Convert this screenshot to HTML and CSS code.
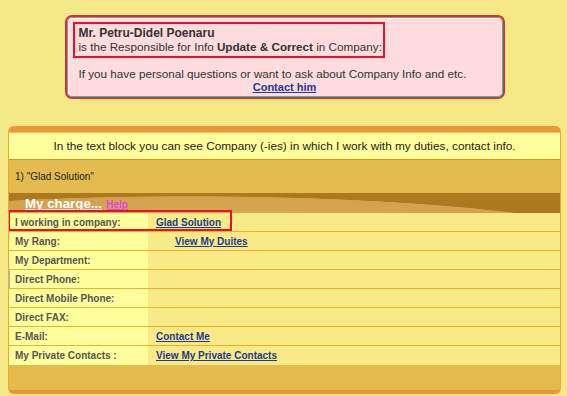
FILE: index.html
```html
<!DOCTYPE html>
<html lang="en">
<head>
  <meta charset="UTF-8" />
  <title>My charge</title>
  <link rel="stylesheet" href="styles.css">
</head>
<body>
  <div class="notice">
    <div class="notice-inner">
      <div class="mark">
        <strong class="person">Mr. Petru-Didel Poenaru</strong><br>
        is the Responsible for Info <strong>Update &amp; Correct</strong> in Company:
      </div>
      <p class="notice-text">If you have personal questions or want to ask about Company Info and etc.</p>
      <div class="notice-link"><a href="#">Contact him</a></div>
    </div>
  </div>

  <div class="company-box">
    <div class="box-head">In the text block you can see Company (-ies) in which I work with my duties, contact info.</div>
    <div class="company-name">1) "Glad Solution"</div>
    <div class="charge-band">
      <span class="charge-title">My charge...</span>
      <a href="#" class="help">Help</a>
    </div>
    <div class="charge-wrap">
      <table class="charge">
        <tr><td class="lbl">I working in company:</td><td class="val"><a href="#">Glad Solution</a></td></tr>
        <tr><td class="lbl">My Rang:</td><td class="val"><a href="#" class="indent">View My Duites</a></td></tr>
        <tr><td class="lbl">My Department:</td><td class="val"></td></tr>
        <tr><td class="lbl lbl-edge">Direct Phone:</td><td class="val"></td></tr>
        <tr><td class="lbl">Direct Mobile Phone:</td><td class="val"></td></tr>
        <tr><td class="lbl">Direct FAX:</td><td class="val"></td></tr>
        <tr><td class="lbl">E-Mail:</td><td class="val"><a href="#">Contact Me</a></td></tr>
        <tr><td class="lbl">My Private Contacts :</td><td class="val"><a href="#">View My Private Contacts</a></td></tr>
      </table>
      <div class="row-mark"></div>
    </div>
    <div class="box-foot"></div>
  </div>
</body>
</html>
```

FILE: styles.css
```css
:root {
  --page-bg: #f5e887;
  --pale: #ffff9c;
  --cell: #f8ea86;
  --gold: #e4bb4e;
  --orange: #e9963a;
  --line: #f7ad2c;
  --link: #1c3a94;
  --mark: #e8102a;
}

body {
  margin: 0;
  padding: 15px 6px 0 8px;
  background: var(--page-bg);
  font-family: "Liberation Sans", Arial, sans-serif;
  color: #333;
}

a {
  color: var(--link);
  font-weight: bold;
}

/* top notice */
.notice {
  width: 436px;
  margin: 0 auto;
  border: 2px solid #df2a35;
  border-radius: 7px;
  background: #fcdcdc;
}

.notice-inner {
  border: 1px solid #9a9090;
  border-radius: 5px;
  box-shadow: inset 1px 1px 0 #fff, 1px 1px 0 #666;
  padding: 4px 5px 3px 5px;
  font-size: 11.7px;
  line-height: 14px;
}

.mark {
  display: inline-block;
  border: 2px solid var(--mark);
  padding: 2px 1px 2px 4px;
  color: #333;
}

.mark strong {
  color: #333;
}

.mark .person {
  font-size: 12px;
}

.notice-text {
  margin: 9px 0 0 6px;
}

.notice-link {
  text-align: center;
  font-size: 11px;
  line-height: 12px;
}

/* company box */
.company-box {
  margin-top: 27px;
  width: 551px;
  border: 1px solid #f2a630;
  border-top: 6px solid var(--orange);
  border-bottom: 4px solid var(--orange);
  border-radius: 6px;
  background: var(--gold);
  overflow: hidden;
}

.box-head {
  height: 26px;
  line-height: 26px;
  background: var(--pale);
  border-top: 1px solid #f3c060;
  border-bottom: 1px solid #c7972f;
  text-align: center;
  font-size: 11.8px;
  color: #222;
}

.company-name {
  height: 33px;
  line-height: 33px;
  padding-left: 6px;
  font-size: 10px;
  color: #222;
}

.charge-band {
  height: 20px;
  line-height: 20px;
  padding-left: 16px;
  background:
    radial-gradient(ellipse 463px 57px at 180px 60px, #dcae5a 0, #d4a24c 99%, transparent 100%),
    #ae7820;
}

.charge-title {
  color: #fff;
  font-size: 13.3px;
  font-weight: bold;
  text-decoration: underline;
}

.help {
  color: #e040e8;
  font-size: 10px;
}

.charge-wrap {
  position: relative;
}

.charge {
  width: 100%;
  border-collapse: collapse;
  font-size: 10px;
}

.charge td {
  height: 18px;
  padding: 0;
  border-bottom: 1px solid var(--line);
}

.charge tr:last-child td {
  border-bottom: none;
  height: 19px;
}

.lbl {
  width: 133px;
  padding-left: 6px !important;
  background: var(--pale);
  color: #555;
  font-weight: bold;
}

.lbl-edge {
  box-shadow: inset 1px 0 0 #a9b4c8;
}

.val {
  padding-left: 8px !important;
  background: var(--cell);
}

.indent {
  margin-left: 19px;
}

.row-mark {
  position: absolute;
  left: -1px;
  top: -3px;
  width: 220px;
  height: 17px;
  border: 2px solid var(--mark);
}

.box-foot {
  height: 25px;
  background: var(--gold);
}
```
